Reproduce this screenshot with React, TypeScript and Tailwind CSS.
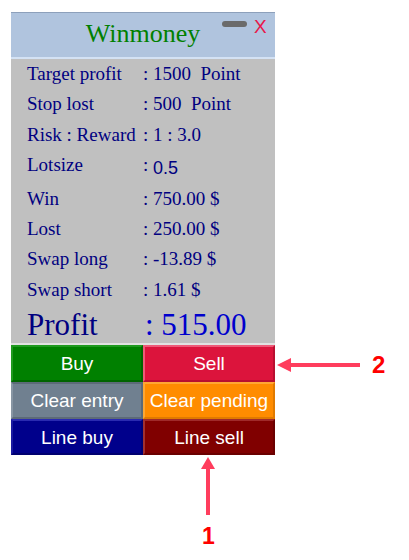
import React from 'react';

interface Row {
  label: string;
  value: React.ReactNode;
}

const rows: Row[] = [
  { label: 'Target profit', value: <>: 1500&nbsp;&nbsp;Point</> },
  { label: 'Stop lost', value: <>: 500&nbsp;&nbsp;Point</> },
  { label: 'Risk : Reward', value: ': 1 : 3.0' },
  {
    label: 'Lotsize',
    value: (
      <>
        :{' '}
        <span className="font-['Liberation_Sans',Arial,sans-serif] text-[18px] align-[-3px]">0.5</span>
      </>
    ),
  },
  { label: 'Win', value: ': 750.00 $' },
  { label: 'Lost', value: ': 250.00 $' },
  { label: 'Swap long', value: ': -13.89 $' },
  { label: 'Swap short', value: ': 1.61 $' },
];

const buttons = [
  { text: 'Buy', cls: 'bg-[#008000] border-t-[#1f9a1f] border-l-[#1f9a1f] border-b-[#006400] border-r-[#006400]' },
  { text: 'Sell', cls: 'bg-[#dc143c] border-t-[#ee5a78] border-l-[#ee5a78] border-b-[#b80f30] border-r-[#b80f30]' },
  { text: 'Clear entry', cls: 'bg-[#708090] border-t-[#5c6a78] border-l-[#8795a3] border-b-[#5c6a78] border-r-[#5c6a78]' },
  { text: 'Clear pending', cls: 'bg-[#ff8c00] border-t-[#ffa733] border-l-[#ffa733] border-b-[#e07a00] border-r-[#e07a00]' },
  { text: 'Line buy', cls: 'bg-[#00008b] border-t-[#2a2ab0] border-l-[#1a1aa0] border-b-[#000070] border-r-[#000070]' },
  { text: 'Line sell', cls: 'bg-[#800000] border-t-[#a02a2a] border-l-[#a03030] border-b-[#6a0000] border-r-[#6a0000]' },
];

export default function App() {
  return (
    <div className="relative w-[409px] h-[560px] bg-white overflow-hidden">
      <div className="pt-[12px] pl-[11px]">
        <div className="w-[264px]">
          {/* Header */}
          <div className="relative h-[47px] bg-[#b0c4de] border-t border-[#8da0bb] border-b-2 border-b-[#d4e2f4] flex items-center justify-center">
            <span className="font-['Liberation_Serif','Times_New_Roman',serif] text-[26px] text-[#008000] leading-none pb-[2px]">
              Winmoney
            </span>
            <div className="absolute left-[211px] top-[8px] w-[25px] h-[6px] rounded-full bg-[#6b6b6b]" />
            <span className="absolute left-[243px] top-[4px] font-['Liberation_Sans',Arial,sans-serif] text-[19px] leading-none text-[#e8174a]">
              X
            </span>
          </div>

          {/* Body */}
          <div className="h-[286px] bg-[#c0c0c0] border-b-2 border-[#e2e2e2] pl-[16px] font-['Liberation_Serif','Times_New_Roman',serif] text-[#000080]">
            {rows.map((r) => (
              <div key={r.label} className="flex text-[19px] leading-[30.4px] whitespace-nowrap">
                <span className="w-[116px]">{r.label}</span>
                <span>{r.value}</span>
              </div>
            ))}
            <div className="flex text-[31px] leading-[40px] whitespace-nowrap">
              <span className="w-[118px]">Profit</span>
              <span className="text-[#0000cd]">: 515.00</span>
            </div>
          </div>

          {/* Buttons */}
          <div className="grid grid-cols-2 grid-rows-[37px_37px_36px]">
            {buttons.map((b) => (
              <button
                key={b.text}
                type="button"
                className={`${b.cls} border-2 flex items-center justify-center text-white font-['Liberation_Sans',Arial,sans-serif] text-[19px] leading-none whitespace-nowrap`}
              >
                {b.text}
              </button>
            ))}
          </div>
        </div>
      </div>

      {/* Annotation 2 */}
      <svg className="absolute left-[276px] top-[357px]" width="86" height="16" viewBox="0 0 86 16">
        <line x1="10" y1="8" x2="84" y2="8" stroke="#ff3d5d" strokeWidth="4" />
        <polygon points="1,8 15,1 15,15" fill="#ff3d5d" />
      </svg>
      <span className="absolute left-[372px] top-[353px] font-['Liberation_Sans',Arial,sans-serif] font-bold text-[24px] leading-none text-[#ff0000]">
        2
      </span>

      {/* Annotation 1 */}
      <svg className="absolute left-[200px] top-[456px]" width="16" height="60" viewBox="0 0 16 60">
        <line x1="8" y1="10" x2="8" y2="59" stroke="#ff3d5d" strokeWidth="4" />
        <polygon points="8,1 1,13 15,13" fill="#ff3d5d" />
      </svg>
      <span className="absolute left-[202px] top-[525px] font-['Liberation_Sans',Arial,sans-serif] font-bold text-[23px] leading-none text-[#ff0000]">
        1
      </span>
    </div>
  );
}
